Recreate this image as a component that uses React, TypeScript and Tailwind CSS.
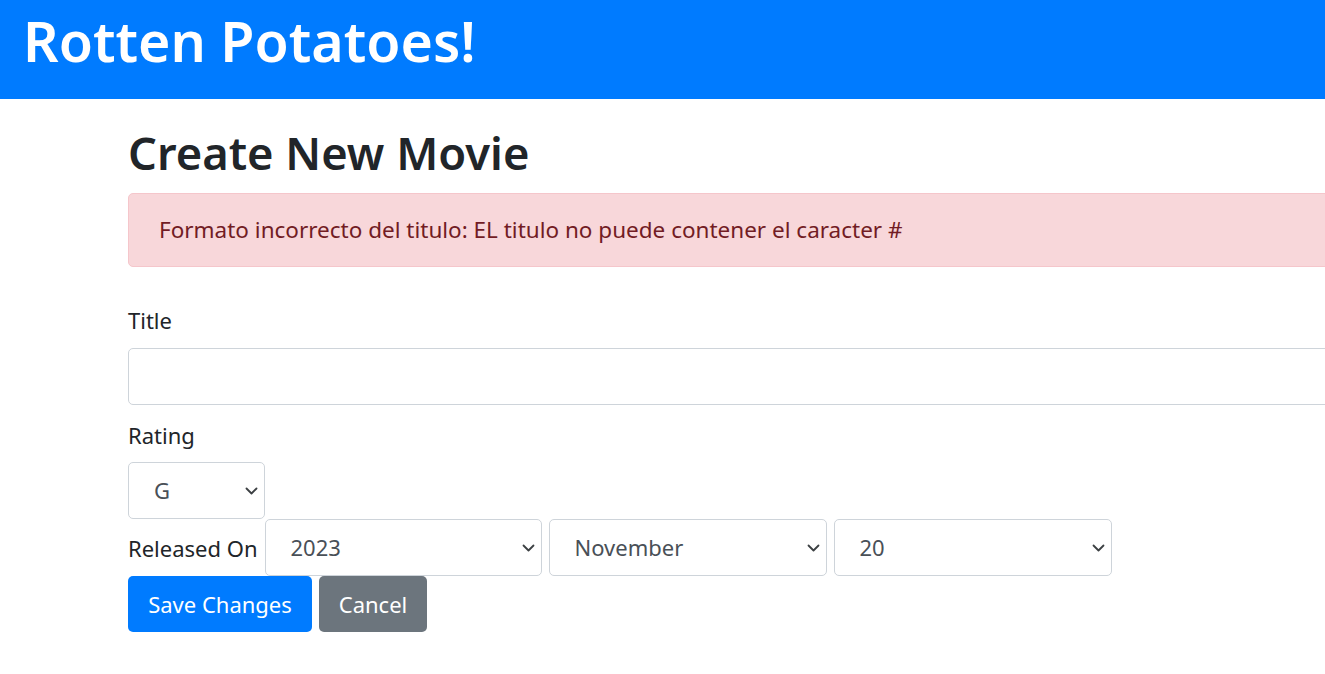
import React from "react";

function Chevron() {
  return (
    <svg width="13" height="8" viewBox="0 0 13 8" className="shrink-0">
      <path d="M1.5 1.5 L6.5 6.5 L11.5 1.5" fill="none" stroke="#3c4043" strokeWidth={1.8} strokeLinecap="round" strokeLinejoin="round" />
    </svg>
  );
}

function Select({ value, width }: { value: string; width: string }) {
  return (
    <div
      className={`flex h-[57px] ${width} shrink-0 items-center justify-between rounded-[5px] border border-[#ced4da] bg-white pl-[25px] pr-[6px] text-[22px] text-[#495057]`}
    >
      <span>{value}</span>
      <Chevron />
    </div>
  );
}

export default function App() {
  return (
    <div
      className="min-h-[674px] w-full overflow-hidden bg-white text-[#212529]"
      style={{ fontFamily: '"Noto Sans", "Open Sans", sans-serif' }}
    >
      {/* Header */}
      <header className="flex h-[99px] w-full items-start bg-[#007bff] pl-[23px]">
        <h1 className="mt-[7px] text-[55.5px] font-semibold leading-[68px] text-white">Rotten Potatoes!</h1>
      </header>

      <div className="w-[1665px] pl-[128px]">
        <h1 className="mt-[24px] mb-[10px] text-[45.3px] font-semibold leading-[60px]">Create New Movie</h1>

        {/* Error alert */}
        <div className="flex h-[74px] items-center rounded-[5px] border border-[#f5c6cb] bg-[#f8d7da] pl-[30px] text-[22.5px] text-[#721c24]">
          Formato incorrecto del titulo: EL titulo no puede contener el caracter #
        </div>

        <form className="mt-[35px] flex flex-col">
          <label className="mb-[10px] text-[22px] leading-[36px]">Title</label>
          <div className="h-[57px] w-full rounded-[5px] border border-[#ced4da] bg-white" />

          <label className="mt-[12px] mb-[9px] text-[22px] leading-[36px]">Rating</label>
          <Select value="G" width="w-[137px]" />

          <div className="flex h-[57px] items-center">
            <span className="mr-[7px] text-[22px] leading-[36px]">Released On</span>
            <div className="flex gap-[7px]">
              <Select value="2023" width="w-[277px]" />
              <Select value="November" width="w-[278px]" />
              <Select value="20" width="w-[278px]" />
            </div>
          </div>

          <div className="flex gap-[7px]">
            <button type="button" className="h-[56px] w-[184px] rounded-[5px] bg-[#007bff] text-[22px] text-white">
              Save Changes
            </button>
            <button type="button" className="h-[56px] w-[108px] rounded-[5px] bg-[#6c757d] text-[22px] text-white">
              Cancel
            </button>
          </div>
        </form>
      </div>
    </div>
  );
}
